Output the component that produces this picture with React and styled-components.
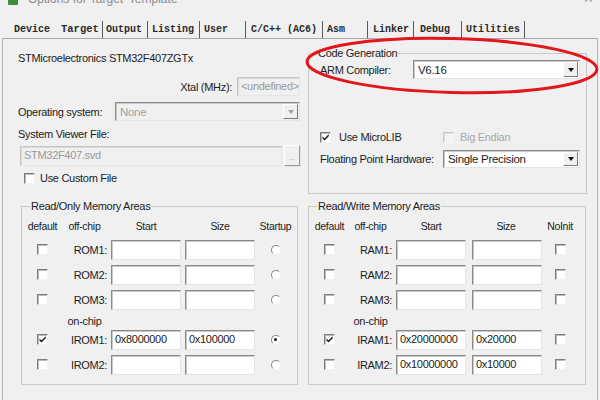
import React from 'react';
import styled, { createGlobalStyle } from 'styled-components';

const GlobalStyle = createGlobalStyle`
  html, body {
    margin: 0;
    padding: 0;
    background: #f0f0f0;
  }
  body {
    font-family: "Liberation Sans", Arial, sans-serif;
    font-size: 11px;
    letter-spacing: -0.3px;
    color: #1c1c1c;
  }
`;

const Window = styled.div`
  position: relative;
  width: 600px;
  height: 400px;
  overflow: hidden;
  background: #f0f0f0;
`;

const TitleBar = styled.div`
  display: flex;
  align-items: flex-start;
  height: 9px;
  overflow: hidden;
  padding-left: 8px;
`;

const AppIcon = styled.div`
  width: 10px;
  height: 12px;
  margin-top: -7px;
  background: #3f8f3a;
  border-radius: 1px;
`;

const TitleText = styled.div`
  margin: -8px 0 0 10px;
  font-size: 12px;
  line-height: 14px;
  letter-spacing: 0;
  color: #8a8a8a;
`;

const CloseGlyph = styled.div`
  margin: -8px 6px 0 auto;
  font-size: 13px;
  line-height: 14px;
  color: #a0a0a0;
`;

const TabStrip = styled.div`
  display: flex;
  margin-top: 12px;
  padding-left: 8px;
  height: 17px;
`;

const Tab = styled.div`
  box-sizing: border-box;
  width: ${p => p.$w}px;
  padding-left: ${p => p.$pad ?? 5}px;
  border-right: ${p => (p.$bar ? '1px solid #5a5a5a' : '1px solid transparent')};
  font-family: "Liberation Mono", "Courier New", monospace;
  font-weight: bold;
  letter-spacing: 0;
  font-size: ${p => (p.$active ? 10.5 : 10)}px;
  line-height: 17px;
  color: #2a2a2a;
  white-space: nowrap;
`;

const Panel = styled.div`
  margin-left: 2px;
  width: 596px;
  height: 362px;
  border-top: 1px solid #a9a9a9;
  border-left: 1px solid #b4b4b4;
  border-right: 1px solid #b4b4b4;
  box-sizing: border-box;
`;

const Columns = styled.div`
  display: grid;
  grid-template-columns: 282px 278px;
  column-gap: 8px;
  padding: 12px 0 0 15px;
`;

const Column = styled.div`
  display: flex;
  flex-direction: column;
`;

const Line = styled.div`
  line-height: 14px;
  height: 14px;
  margin-top: ${p => p.$mt || 0}px;
  color: ${p => (p.$dim ? '#a0a0a0' : '#1c1c1c')};
  white-space: nowrap;
`;

const FieldRow = styled.div`
  display: flex;
  align-items: center;
  justify-content: ${p => (p.$end ? 'flex-end' : 'flex-start')};
  gap: ${p => p.$gap ?? 0}px;
  width: ${p => (p.$w ? `${p.$w}px` : 'auto')};
  height: ${p => p.$h || 19}px;
  margin-top: ${p => p.$mt || 0}px;
  margin-left: ${p => p.$ml || 0}px;
`;

const Label = styled.div`
  width: ${p => (p.$w ? `${p.$w}px` : 'auto')};
  flex-shrink: 0;
  white-space: nowrap;
  color: ${p => (p.$dim ? '#a8a8a8' : '#1c1c1c')};
`;

const TextBox = styled.div`
  box-sizing: border-box;
  width: ${p => p.$w}px;
  height: ${p => p.$h || 20}px;
  padding: 2px 0 0 3px;
  line-height: 13px;
  justify-self: ${p => (p.$end ? 'end' : 'start')};
  background: ${p => (p.$disabled ? '#f0f0f0' : '#ffffff')};
  color: ${p => (p.$disabled ? '#9a9a9a' : '#1c1c1c')};
  border: 1px solid;
  border-color: ${p => (p.$disabled ? '#c4c4c4 #e6e6e6 #e6e6e6 #c4c4c4' : '#8a8a8a #e4e4e4 #e4e4e4 #8a8a8a')};
  box-shadow: inset 1px 1px 0 ${p => (p.$disabled ? '#dadada' : '#c9c9c9')};
  white-space: nowrap;
  overflow: hidden;
`;

const SelectBox = styled.div`
  box-sizing: border-box;
  display: flex;
  align-items: center;
  width: ${p => p.$w}px;
  height: ${p => p.$h || 19}px;
  padding: 1px;
  background: ${p => (p.$disabled ? '#f0f0f0' : '#ffffff')};
  border: 1px solid;
  border-color: #8a8a8a #e4e4e4 #e4e4e4 #8a8a8a;
  box-shadow: inset 1px 1px 0 #c9c9c9;
`;

const SelectValue = styled.div`
  flex: 1;
  padding-left: 3px;
  font-size: 11.5px;
  color: ${p => (p.$disabled ? '#a0a0a0' : '#1c1c1c')};
`;

const DropButton = styled.div`
  box-sizing: border-box;
  width: 15px;
  height: 100%;
  display: flex;
  align-items: center;
  justify-content: center;
  background: #f0f0f0;
  border: 1px solid;
  border-color: #ffffff #7a7a7a #7a7a7a #ffffff;
  &::after {
    content: '';
    border-left: 3.5px solid transparent;
    border-right: 3.5px solid transparent;
    border-top: 4px solid ${p => (p.$disabled ? '#a0a0a0' : '#111')};
  }
`;

const BrowseButton = styled.div`
  box-sizing: border-box;
  width: 16px;
  height: 21px;
  display: flex;
  align-items: flex-end;
  justify-content: center;
  padding-bottom: 3px;
  font-size: 8px;
  color: #a0a0a0;
  background: #f0f0f0;
  border: 1px solid;
  border-color: #ffffff #9a9a9a #9a9a9a #ffffff;
  box-shadow: 1px 1px 0 #e0e0e0;
`;

const Check = styled.div`
  box-sizing: border-box;
  position: relative;
  width: 11px;
  height: 11px;
  flex-shrink: 0;
  background: ${p => (p.$disabled ? '#f4f4f4' : '#ffffff')};
  border: 1px solid;
  border-color: ${p => (p.$disabled ? '#c8c8c8 #f2f2f2 #f2f2f2 #c8c8c8' : '#7d7d7d #f2f2f2 #f2f2f2 #7d7d7d')};
  box-shadow: inset 1px 1px 0 ${p => (p.$disabled ? '#e0e0e0' : '#b9b9b9')};
  justify-self: center;
`;

const CheckMark = styled.svg`
  position: absolute;
  left: -1px;
  top: -1px;
`;

const Radio = styled.div`
  box-sizing: border-box;
  width: 10px;
  height: 10px;
  border-radius: 50%;
  justify-self: center;
  display: flex;
  align-items: center;
  justify-content: center;
  background: #ffffff;
  border: 1px solid;
  border-color: #8a8a8a #f4f4f4 #f4f4f4 #8a8a8a;
  &::after {
    content: '';
    width: 3px;
    height: 3px;
    border-radius: 50%;
    background: ${p => (p.$on ? '#111' : 'transparent')};
  }
`;

const GroupBox = styled.div`
  position: relative;
  box-sizing: border-box;
  height: ${p => p.$h}px;
  width: ${p => p.$w}px;
  margin-top: ${p => p.$mt || 0}px;
  margin-left: ${p => p.$ml || 0}px;
  border: 1px solid #cacaca;
  padding: ${p => p.$pad};
`;

const Legend = styled.div`
  position: absolute;
  top: -7px;
  left: 8px;
  padding: 0 1px;
  background: #f0f0f0;
  line-height: 13px;
  white-space: nowrap;
`;

const MemGrid = styled.div`
  display: grid;
  grid-template-columns: ${p => p.$cols};
  grid-template-rows: 23px 25px 25px 25px 15px 25px 25px;
  column-gap: 4px;
  align-items: center;
`;

const HeadCell = styled.div`
  text-align: center;
  white-space: nowrap;
  font-size: 10.5px;
`;

const RowLabel = styled.div`
  text-align: ${p => (p.$center ? 'center' : 'right')};
  align-self: ${p => (p.$center ? 'end' : 'center')};
  grid-column: ${p => (p.$center ? '2' : 'auto')};
  white-space: nowrap;
`;

const Spacer = styled.div``;

const Overlay = styled.svg`
  position: absolute;
  left: 0;
  top: 0;
  pointer-events: none;
`;

const tabs = [
  { t: 'Device', w: 48, pad: 6 },
  { t: 'Target', w: 47, pad: 5, active: true, bar: true },
  { t: 'Output', w: 45, pad: 3, bar: true },
  { t: 'Listing', w: 52, pad: 4, bar: true },
  { t: 'User', w: 46, pad: 4, bar: true },
  { t: 'C/C++ (AC6)', w: 77, pad: 5, bar: true },
  { t: 'Asm', w: 45, pad: 4, bar: true },
  { t: 'Linker', w: 46, pad: 5, bar: true },
  { t: 'Debug', w: 48, pad: 6, bar: true },
  { t: 'Utilities', w: 63, pad: 4, bar: true },
];

const romRows = [
  { name: 'ROM1:', start: '', size: '' },
  { name: 'ROM2:', start: '', size: '' },
  { name: 'ROM3:', start: '', size: '' },
  null,
  { name: 'IROM1:', start: '0x8000000', size: '0x100000', def: true, startup: true },
  { name: 'IROM2:', start: '', size: '' },
];

const ramRows = [
  { name: 'RAM1:', start: '', size: '' },
  { name: 'RAM2:', start: '', size: '' },
  { name: 'RAM3:', start: '', size: '' },
  null,
  { name: 'IRAM1:', start: '0x20000000', size: '0x20000', def: true },
  { name: 'IRAM2:', start: '0x10000000', size: '0x10000' },
];

const Tick = () => (
  <CheckMark width="11" height="11" viewBox="0 0 11 11">
    <path d="M2.5 4.5 L4.5 6.6 L8.7 2.3 L8.7 4.2 L4.5 8.5 L2.5 6.4 Z" fill="#111" />
  </CheckMark>
);

const CheckBox = ({ on, disabled }) => (
  <Check $disabled={disabled}>{on && <Tick />}</Check>
);

const Select = ({ w, h, value, disabled }) => (
  <SelectBox $w={w} $h={h} $disabled={disabled}>
    <SelectValue $disabled={disabled}>{value}</SelectValue>
    <DropButton $disabled={disabled} />
  </SelectBox>
);

const MemoryArea = ({ title, rows, cols, last, mt, ml, w }) => (
  <GroupBox $h={179} $w={w} $mt={mt} $ml={ml} $pad="7px 0 0 5px">
    <Legend>{title}</Legend>
    <MemGrid $cols={cols}>
      <HeadCell>default</HeadCell>
      <HeadCell>off-chip</HeadCell>
      <HeadCell>Start</HeadCell>
      <HeadCell>Size</HeadCell>
      <HeadCell>{last}</HeadCell>
      {rows.map((r, i) =>
        r ? (
          <React.Fragment key={i}>
            <CheckBox on={r.def} />
            <RowLabel>{r.name}</RowLabel>
            <TextBox $w={70}>{r.start}</TextBox>
            <TextBox $w={70} $end>{r.size}</TextBox>
            {last === 'Startup' ? <Radio $on={r.startup} /> : <CheckBox />}
          </React.Fragment>
        ) : (
          <React.Fragment key={i}>
            <Spacer />
            <RowLabel $center>on-chip</RowLabel>
            <Spacer />
            <Spacer />
            <Spacer />
          </React.Fragment>
        )
      )}
    </MemGrid>
  </GroupBox>
);

export default function App() {
  return (
    <Window>
      <GlobalStyle />
      <TitleBar>
        <AppIcon />
        <TitleText>Options for Target 'Template'</TitleText>
        <CloseGlyph>✕</CloseGlyph>
      </TitleBar>
      <TabStrip>
        {tabs.map(t => (
          <Tab key={t.t} $w={t.w} $pad={t.pad} $bar={t.bar} $active={t.active}>
            {t.t}
          </Tab>
        ))}
      </TabStrip>
      <Panel>
        <Columns>
          <Column>
            <Line>STMicroelectronics STM32F407ZGTx</Line>
            <FieldRow $end $gap={5} $mt={12}>
              <Label>Xtal (MHz):</Label>
              <TextBox $w={63} $h={19} $disabled>&lt;undefined&gt;</TextBox>
            </FieldRow>
            <FieldRow $mt={6}>
              <Label $w={97}>Operating system:</Label>
              <Select w={185} value="None" disabled />
            </FieldRow>
            <Line $mt={6}>System Viewer File:</Line>
            <FieldRow $mt={4} $h={21} $ml={2} $gap={2}>
              <TextBox $w={262} $h={20} $disabled>STM32F407.svd</TextBox>
              <BrowseButton>...</BrowseButton>
            </FieldRow>
            <FieldRow $mt={5} $h={14} $ml={6} $gap={5}>
              <CheckBox />
              <Label>Use Custom File</Label>
            </FieldRow>
            <MemoryArea
              title="Read/Only Memory Areas"
              rows={romRows}
              cols="31px 45px 70px 70px 33px"
              last="Startup"
              mt={21}
              ml={3}
              w={277}
            />
          </Column>
          <Column>
            <GroupBox $h={141} $w={279} $mt={2} $pad="6px 0 0 11px">
              <Legend>Code Generation</Legend>
              <FieldRow>
                <Label $w={93}>ARM Compiler:</Label>
                <Select w={167} value="V6.16" />
              </FieldRow>
              <FieldRow $mt={51} $h={14}>
                <FieldRow $gap={8} $w={123} $h={14}>
                  <CheckBox on />
                  <Label>Use MicroLIB</Label>
                </FieldRow>
                <FieldRow $gap={6} $h={14}>
                  <CheckBox disabled />
                  <Label $dim>Big Endian</Label>
                </FieldRow>
              </FieldRow>
              <FieldRow $mt={6} $h={18}>
                <Label $w={123}>Floating Point Hardware:</Label>
                <Select w={137} h={18} value="Single Precision" />
              </FieldRow>
            </GroupBox>
            <MemoryArea
              title="Read/Write Memory Areas"
              rows={ramRows}
              cols="31px 43px 70px 72px 28px"
              last="NoInit"
              mt={12}
              w={278}
            />
          </Column>
        </Columns>
      </Panel>
      <Overlay width="600" height="400">
        <ellipse
          cx="452"
          cy="65.5"
          rx="145"
          ry="27"
          fill="none"
          stroke="#e3161c"
          strokeWidth="3"
          transform="rotate(1.5 452 65.5)"
        />
      </Overlay>
    </Window>
  );
}
